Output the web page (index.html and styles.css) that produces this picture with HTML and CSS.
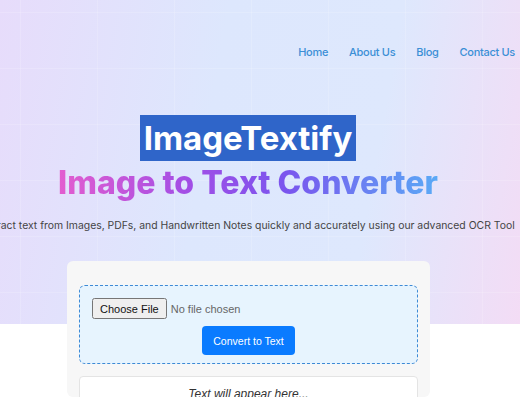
FILE: index.html
```html
<!DOCTYPE html>
<html lang="en">
<head>
    <meta charset="UTF-8">
    <meta name="viewport" content="width=device-width, initial-scale=1.0">
    <title>ImageTextify - Image to Text Converter</title>
    <link rel="stylesheet" href="styles.css">
</head>
<body>

<div class="hero">
    <!-- 顶部导航 -->
    <nav class="nav">
        <a href="#">Home</a>
        <a href="#">About Us</a>
        <a href="#">Blog</a>
        <a href="#">Contact Us</a>
    </nav>

    <div class="hero-text">
        <h1 class="brand"><span>ImageTextify</span></h1>
        <h2 class="tagline">Image to Text Converter</h2>
        <p class="intro">Extract text from Images, PDFs, and Handwritten Notes quickly and accurately using our advanced OCR Tool</p>
    </div>
</div>

<!-- 上传卡片 -->
<div class="card">
    <div class="drop-zone">
        <input type="file" id="file-input" accept="image/*,.pdf">
        <button id="convert-btn">Convert to Text</button>
    </div>
    <div class="output">Text will appear here...</div>
</div>

</body>
</html>
```

FILE: styles.css
```css
body {
    margin: 0;
    font-family: Inter, "Noto Sans", sans-serif;
    background: #fff;
    height: 397px;
    overflow: hidden;
}
.hero {
    height: 324px;
    background:
        linear-gradient(rgba(255,255,255,0.15) 1px, transparent 1px) 0 12px / 76px 56px,
        linear-gradient(90deg, rgba(255,255,255,0.15) 1px, transparent 1px) 20px 0 / 77px 76px,
        linear-gradient(100deg, #e7dcfb 0%, #dde7fd 40%, #dee8fd 70%, #f3dcf5 100%);
}
.nav {
    display: flex;
    justify-content: flex-end;
    gap: 21px;
    padding: 45px 5px 0 0;
}
.nav a {
    color: #3b8fd6;
    text-decoration: none;
    font-size: 11px;
    font-weight: 500;
    letter-spacing: -0.3px;
}
.hero-text {
    width: 496px;
    display: flex;
    flex-direction: column;
    align-items: center;
    padding-top: 58px;
}
.brand {
    margin: 0;
    font-size: 33px;
    font-weight: 700;
    line-height: 43px;
}
.brand span {
    background: #2f65c9;
    color: #fff;
    padding: 3px 4px;
}
.tagline {
    margin: 2px 0 0;
    font-size: 32px;
    font-weight: 800;
    line-height: 42px;
    background: linear-gradient(90deg, #e35dcf 0%, #a14ee6 35%, #7a55ee 60%, #5aaaf6 100%);
    -webkit-background-clip: text;
    background-clip: text;
    color: transparent;
}
.intro {
    margin: 15px 0 0;
    font-size: 10.4px;
    color: #444;
    white-space: nowrap;
}
.card {
    width: 339px;
    margin: -63px 0 0 67px;
    padding: 24px 12px 0;
    background: #f7f7f7;
    border-radius: 6px;
    height: 112px;
}
.drop-zone {
    border: 1.5px dashed #3d8ad6;
    background: #e7f4fe;
    border-radius: 6px;
    padding: 12px 12px 8px;
    display: flex;
    flex-direction: column;
    align-items: center;
    gap: 7px;
}
#file-input {
    align-self: flex-start;
    font-family: "Liberation Sans", Arial, sans-serif;
    font-size: 11px;
    color: #666;
}
#file-input::file-selector-button {
    height: 21px;
    padding: 0 6px;
    color: #111;
    font-family: "Liberation Sans", Arial, sans-serif;
    font-size: 11px;
}
#convert-btn {
    background: #0a7bff;
    color: #fff;
    border: none;
    border-radius: 4px;
    padding: 0 11px;
    height: 29px;
    font-family: "Liberation Sans", Arial, sans-serif;
    font-size: 10.5px;
}
.output {
    margin-top: 12px;
    background: #fff;
    border: 1px solid #e4e4e4;
    border-radius: 4px;
    height: 30px;
    text-align: center;
    padding-top: 10px;
    font-family: "Liberation Sans", Arial, sans-serif;
    font-style: italic;
    font-size: 12px;
    color: #333;
}
```
